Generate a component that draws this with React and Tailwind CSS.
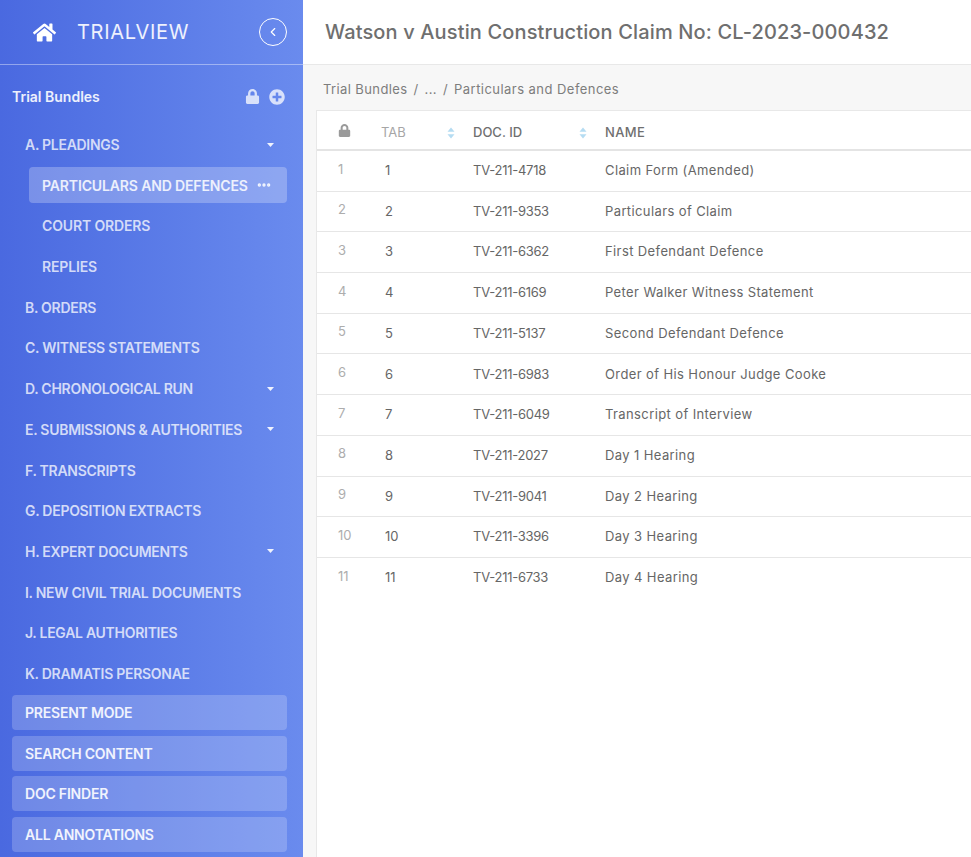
import React from 'react';
import { ChevronLeft, Ellipsis } from 'lucide-react';
import { FaHome, FaLock, FaPlusCircle } from 'react-icons/fa';

const folders = [
  { label: 'A. PLEADINGS', caret: true },
  { label: 'PARTICULARS AND DEFENCES', sub: true, active: true },
  { label: 'COURT ORDERS', sub: true },
  { label: 'REPLIES', sub: true },
  { label: 'B. ORDERS' },
  { label: 'C. WITNESS STATEMENTS' },
  { label: 'D. CHRONOLOGICAL RUN', caret: true },
  { label: 'E. SUBMISSIONS & AUTHORITIES', caret: true },
  { label: 'F. TRANSCRIPTS' },
  { label: 'G. DEPOSITION EXTRACTS' },
  { label: 'H. EXPERT DOCUMENTS', caret: true },
  { label: 'I. NEW CIVIL TRIAL DOCUMENTS' },
  { label: 'J. LEGAL AUTHORITIES' },
  { label: 'K. DRAMATIS PERSONAE' },
];

const actions = ['PRESENT MODE', 'SEARCH CONTENT', 'DOC FINDER', 'ALL ANNOTATIONS'];

const docs = [
  ['TV-211-4718', 'Claim Form (Amended)'],
  ['TV-211-9353', 'Particulars of Claim'],
  ['TV-211-6362', 'First Defendant Defence'],
  ['TV-211-6169', 'Peter Walker Witness Statement'],
  ['TV-211-5137', 'Second Defendant Defence'],
  ['TV-211-6983', 'Order of His Honour Judge Cooke'],
  ['TV-211-6049', 'Transcript of Interview'],
  ['TV-211-2027', 'Day 1 Hearing'],
  ['TV-211-9041', 'Day 2 Hearing'],
  ['TV-211-3396', 'Day 3 Hearing'],
  ['TV-211-6733', 'Day 4 Hearing'],
];

const SortIcon = () => (
  <svg width="8" height="12" viewBox="0 0 8 12" className="fill-[#b5dcf2]">
    <path d="M4 0.5 L7.5 4.8 H0.5 Z" />
    <path d="M4 11.5 L0.5 7.2 H7.5 Z" />
  </svg>
);

const Caret = () => (
  <svg width="7" height="4" viewBox="0 0 7 4" className="fill-white/90">
    <path d="M0 0 H7 L3.5 4 Z" />
  </svg>
);

const FolderRow = ({ label, caret, sub, active }) => (
  <div
    className={`flex h-[36px] items-center justify-between rounded text-[14px] font-semibold whitespace-nowrap ${
      sub ? 'ml-[17px] pl-[13px] pr-[15px] tracking-[-0.01em]' : 'pl-[13px] pr-[13px] tracking-[-0.02em]'
    } ${active ? 'bg-white/25 text-white/85' : 'text-white/75'}`}
  >
    <span>{label}</span>
    {caret && <Caret />}
    {active && <Ellipsis size={16} strokeWidth={3} className="text-white/90" />}
  </div>
);

export default function App() {
  return (
    <div className="flex h-[857px] w-[971px] overflow-hidden bg-white font-['Inter',sans-serif]">
      <aside className="flex w-[303px] shrink-0 flex-col bg-gradient-to-r from-[#4a69e0] to-[#6a8bee]">
        <div className="flex h-[65px] shrink-0 items-center border-b border-white/40 pl-[33px] pr-[16px]">
          <FaHome size={23} className="text-white" />
          <span className="ml-[21px] text-[20px] tracking-[0.035em] text-white/90">TRIALVIEW</span>
          <button className="ml-auto flex h-[28px] w-[28px] items-center justify-center rounded-full border border-white text-white">
            <ChevronLeft size={14} />
          </button>
        </div>

        <div className="flex h-[61.5px] shrink-0 items-center justify-between pl-[12px] pr-[18px] pt-[2px]">
          <span className="text-[14px] font-semibold text-white/90">Trial Bundles</span>
          <div className="flex items-center gap-[9px] text-white/75">
            <FaLock size={15} />
            <FaPlusCircle size={16} />
          </div>
        </div>

        <nav className="flex flex-col gap-[4.7px] pl-[12px] pr-[16px]">
          {folders.map((f) => (
            <FolderRow key={f.label} {...f} />
          ))}
        </nav>

        <div className="mt-[3.5px] flex flex-col gap-[5.7px] pl-[12px] pr-[16px]">
          {actions.map((a) => (
            <div
              key={a}
              className="flex h-[35px] items-center rounded bg-white/20 pl-[13px] text-[14px] font-semibold tracking-[-0.015em] text-white/90"
            >
              {a}
            </div>
          ))}
        </div>
      </aside>

      <main className="flex min-w-0 flex-1 flex-col">
        <header className="flex h-[65px] shrink-0 items-center border-b border-[#e8e8e8] pl-[22px]">
          <h1 className="text-[20px] font-medium tracking-[0.007em] whitespace-nowrap text-[#6f6f6f]">
            Watson v Austin Construction Claim No: CL-2023-000432
          </h1>
        </header>

        <div className="flex flex-1 flex-col bg-[#f7f7f7] pl-[13px]">
          <div className="flex h-[45px] shrink-0 items-center gap-[6px] pl-[7px] pt-[4px] text-[13px] tracking-[0.03em] text-[#7d7d7d]">
            <span>Trial Bundles</span>
            <span>/</span>
            <span>...</span>
            <span>/</span>
            <span className="tracking-[0.035em]">Particulars and Defences</span>
          </div>

          <div className="flex-1 border-t border-l border-[#e8e8e8] bg-white">
            <div className="flex h-[40px] items-center border-b-2 border-[#e4e4e4] pt-[6px] text-[13px]">
              <div className="w-[64px] pb-[6px] pl-[21px] text-[#9a9a9a]">
                <FaLock size={13} />
              </div>
              <div className="flex w-[92px] items-center justify-between pr-[18px] font-normal text-[#a6a6a6]">
                TAB
                <SortIcon />
              </div>
              <div className="flex w-[132px] items-center justify-between pr-[18px] font-medium text-[#6f6f6f]">
                DOC. ID
                <SortIcon />
              </div>
              <div className="font-medium tracking-[0.03em] text-[#6f6f6f]">NAME</div>
            </div>

            {docs.map(([id, name], i) => (
              <div
                key={id}
                className={`flex h-[40.7px] items-center text-[13px] text-[#666666] ${
                  i < docs.length - 1 ? 'border-b border-[#e6e6e6]' : ''
                }`}
              >
                <div className="w-[68px] pb-[3px] pl-[21px] text-[#adadad]">{i + 1}</div>
                <div className="w-[88px]">{i + 1}</div>
                <div className="w-[132px] tracking-[-0.02em]">{id}</div>
                <div className="tracking-[0.03em] whitespace-nowrap">{name}</div>
              </div>
            ))}
          </div>
        </div>
      </main>
    </div>
  );
}
